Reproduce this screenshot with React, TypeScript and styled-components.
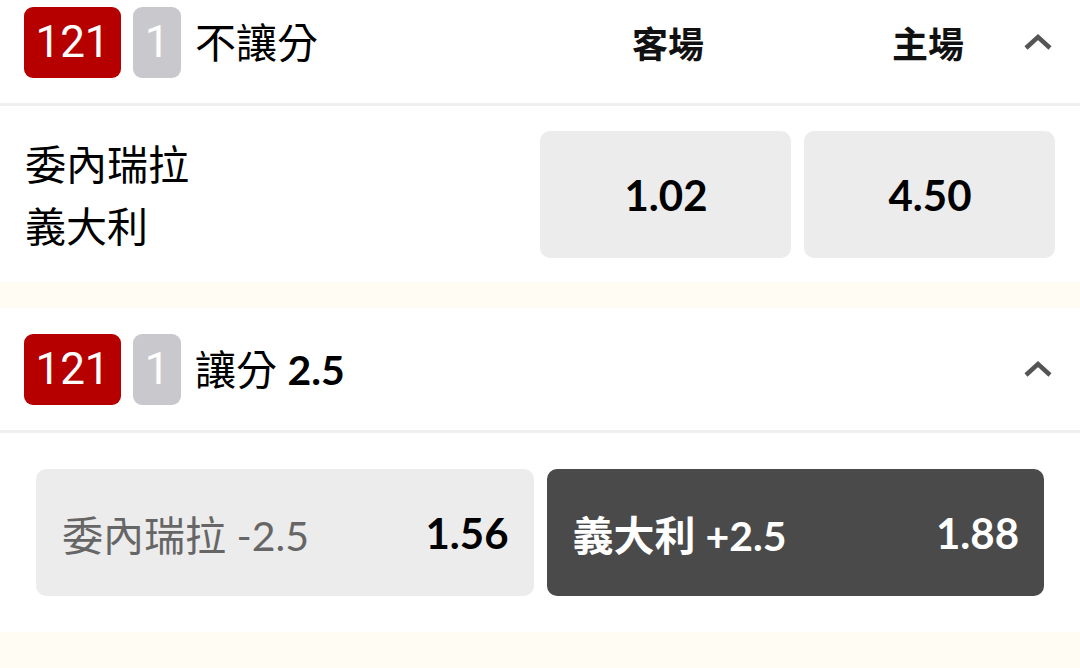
import React from "react";
import styled, { createGlobalStyle } from "styled-components";

const Global = createGlobalStyle`
  html, body { margin: 0; padding: 0; background: #fffcf3; }
  body { font-family: "Lato", "Noto Sans CJK TC", sans-serif; overflow: hidden; }
`;

const Page = styled.div`
  width: 1080px;
  margin-top: -19px;
`;

const Card = styled.section`
  background: #ffffff;
  margin-bottom: 26px;
`;

const Header = styled.header`
  display: flex;
  align-items: center;
  padding: 0 18px 0 24px;
  border-bottom: 3px solid #f0f0f0;
  box-sizing: border-box;
  height: 125px;
`;

const TitleGroup = styled.div`
  flex: 1;
  display: flex;
  align-items: center;
  gap: 12px;
`;

const Badge = styled.div<{ $tone: "red" | "gray" }>`
  height: 71px;
  min-width: ${(p) => (p.$tone === "red" ? "97px" : "48px")};
  box-sizing: border-box;
  border-radius: 9px;
  background: ${(p) => (p.$tone === "red" ? "#b60000" : "#c9c9cd")};
  color: #ffffff;
  font-family: "Roboto", sans-serif;
  font-size: 44px;
  font-weight: 400;
  display: flex;
  align-items: center;
  justify-content: center;
  line-height: 1;
`;

const Title = styled.h2`
  margin: 0 0 0 2px;
  font-size: 41px;
  font-weight: 400;
  color: #000;
  line-height: 1;
  & b { font-weight: 700; font-size: 41px; }
`;

const HeadCol = styled.div<{ $ml: number }>`
  width: 120px;
  margin-left: ${(p) => p.$ml}px;
  text-align: center;
  font-size: 36px;
  font-weight: 700;
  color: #111;
`;

const Chevron = styled.button`
  width: 48px;
  height: 48px;
  margin-left: 26px;
  border: 0;
  padding: 0;
  background: transparent;
  display: flex;
  align-items: center;
  justify-content: center;
`;

const MoneyBody = styled.div`
  display: grid;
  grid-template-columns: 1fr 251px 251px;
  column-gap: 13px;
  align-items: start;
  padding: 25px 25px 24px 25px;
`;

const Teams = styled.div`
  font-size: 41px;
  line-height: 62px;
  padding-top: 3px;
  color: #000;
`;

const OddsButton = styled.button<{ $dark?: boolean; $split?: boolean }>`
  height: 127px;
  border: 0;
  border-radius: 10px;
  background: ${(p) => (p.$dark ? "#4a4a4a" : "#ececec")};
  color: ${(p) => (p.$dark ? "#ffffff" : "#000")};
  font-family: "Lato", "Noto Sans CJK TC", sans-serif;
  font-size: 42px;
  font-weight: 700;
  display: flex;
  align-items: center;
  justify-content: ${(p) => (p.$split ? "space-between" : "center")};
  padding: 0 25px 0 26px;
  box-sizing: border-box;
`;

const Label = styled.span<{ $dark?: boolean }>`
  font-size: 41px;
  font-weight: ${(p) => (p.$dark ? 700 : 400)};
  color: ${(p) => (p.$dark ? "#ffffff" : "#666666")};
`;

const HandicapBody = styled.div`
  display: grid;
  grid-template-columns: 1fr 1fr;
  column-gap: 13px;
  padding: 36px;
`;

const Up = () => (
  <svg width="30" height="20" viewBox="0 0 30 20">
    <path d="M3 16 L15 5 L27 16" fill="none" stroke="#555" strokeWidth="4.5" strokeLinecap="butt" />
  </svg>
);

const Badges = () => (
  <>
    <Badge $tone="red">121</Badge>
    <Badge $tone="gray">1</Badge>
  </>
);

export default function App() {
  return (
    <Page>
      <Global />
      <Card>
        <Header>
          <TitleGroup>
            <Badges />
            <Title>不讓分</Title>
          </TitleGroup>
          <HeadCol $ml={0}>客場</HeadCol>
          <HeadCol $ml={140}>主場</HeadCol>
          <Chevron aria-label="collapse">
            <Up />
          </Chevron>
        </Header>
        <MoneyBody>
          <Teams>
            委內瑞拉
            <br />
            義大利
          </Teams>
          <OddsButton>1.02</OddsButton>
          <OddsButton>4.50</OddsButton>
        </MoneyBody>
      </Card>
      <Card>
        <Header>
          <TitleGroup>
            <Badges />
            <Title>
              讓分 <b>2.5</b>
            </Title>
          </TitleGroup>
          <Chevron aria-label="collapse">
            <Up />
          </Chevron>
        </Header>
        <HandicapBody>
          <OddsButton $split>
            <Label>委內瑞拉 -2.5</Label>
            <span>1.56</span>
          </OddsButton>
          <OddsButton $split $dark>
            <Label $dark>義大利 +2.5</Label>
            <span>1.88</span>
          </OddsButton>
        </HandicapBody>
      </Card>
    </Page>
  );
}
